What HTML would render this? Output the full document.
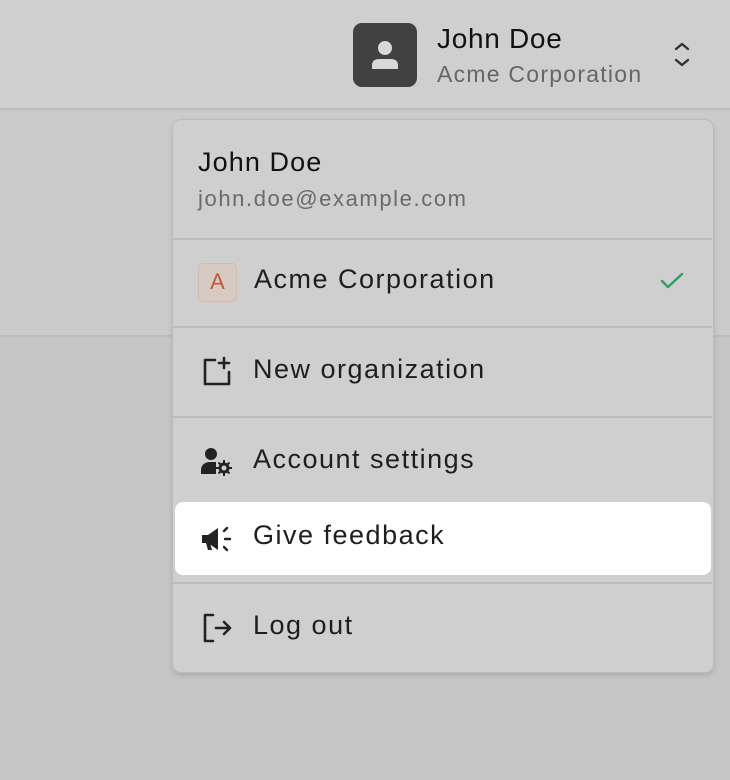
<!DOCTYPE html>
<html><head><style>
*{margin:0;padding:0;box-sizing:border-box}
body{width:730px;height:780px;background:#c6c6c6;font-family:"Liberation Sans",sans-serif;position:relative;overflow:hidden;color:#1c1c1c}
.hdr{position:absolute;left:0;top:0;width:730px;height:110px;background:#cfcfcf;border-bottom:2px solid #bdbdbd}
.mid{position:absolute;left:0;top:111px;width:730px;height:226px;background:#cbcbcb;border-bottom:2px solid #bdbdbd}
.av{position:absolute;left:353px;top:23px;width:64px;height:64px;background:#414141;border-radius:9px}
.t{position:absolute;white-space:nowrap}
.menu{position:absolute;left:172px;top:119px;width:542px;height:554px;background:#cfcfcf;border:1.5px solid #bcbcbc;border-radius:9px;box-shadow:0 3px 6px rgba(0,0,0,.12)}
.sep{position:absolute;left:0;width:539px;height:2px;background:#bdbdbd}
.hl{position:absolute;left:2px;top:382px;width:536px;height:73px;background:#fff;border-radius:8px}
.it{position:absolute;left:80px;font-size:27px;color:#1e1e1e;letter-spacing:1.5px;white-space:nowrap}
</style></head><body>
<div class="hdr"></div>
<div class="mid"></div>
<div class="av"><svg width="64" height="64" viewBox="0 0 64 64"><circle cx="32" cy="25" r="7" fill="#d8d8d8"/><path d="M19 46v-4c0-4 3-6 7-6h12c4 0 7 2 7 6v4z" fill="#d8d8d8"/></svg></div>
<div class="t" style="left:437px;top:23px;font-size:28px;color:#111;letter-spacing:0.7px">John Doe</div>
<div class="t" style="left:437px;top:61px;font-size:23px;color:#666;letter-spacing:1.25px">Acme Corporation</div>
<svg class="t" style="left:672px;top:40px" width="20" height="30" viewBox="0 0 20 30"><path d="M4 9l6-5 6 5M4 20l6 5 6-5" fill="none" stroke="#333" stroke-width="2.4" stroke-linecap="round" stroke-linejoin="round"/></svg>
<div class="menu">
<div class="t" style="left:25px;top:27px;font-size:27px;color:#111;letter-spacing:1.1px">John Doe</div>
<div class="t" style="left:25px;top:66px;font-size:22px;color:#6a6a6a;letter-spacing:1.6px">john.doe@example.com</div>
<div class="sep" style="top:118px"></div>
<div class="t" style="left:25px;top:143px;width:39px;height:39px;border:1.5px solid #dcb7a4;background:#d6cac3;border-radius:5px;color:#c05a38;font-size:22px;text-align:center;line-height:36px">A</div>
<div class="it" style="top:144px;left:81px">Acme Corporation</div>
<svg class="t" style="left:486px;top:150px" width="26" height="22" viewBox="0 0 26 22"><path d="M3 11l6 6L23 4" fill="none" stroke="#2f9e6a" stroke-width="2.4" stroke-linecap="round" stroke-linejoin="round"/></svg>
<div class="sep" style="top:206px"></div>
<svg class="t" style="left:28px;top:236px" width="32" height="32" viewBox="0 0 32 32"><path d="M14 4H4v24h24V16M23 2v10M18 7h10" fill="none" stroke="#222" stroke-width="2.6" stroke-linecap="round" stroke-linejoin="round"/></svg>
<div class="it" style="top:234px">New organization</div>
<div class="sep" style="top:296px"></div>
<svg class="t" style="left:27px;top:326px" width="34" height="30" viewBox="0 0 34 30"><circle cx="11" cy="8" r="6" fill="#222"/><path d="M1 28v-4c0-5 4-8 9-8h6v12z" fill="#222"/><circle cx="24" cy="22" r="4" fill="none" stroke="#222" stroke-width="3"/><path d="M24 14v3M24 27v3M16 22h3M29 22h3M18.5 16.5l2 2M27.5 25.5l2 2M18.5 27.5l2-2M27.5 18.5l2-2" stroke="#222" stroke-width="2"/></svg>
<div class="it" style="top:324px">Account settings</div>
<div class="hl"></div>
<svg class="t" style="left:27px;top:404px" width="34" height="30" viewBox="0 0 34 30"><path d="M2 11h6l10-7v22l-10-7H2z" fill="#222"/><path d="M6 19l2 7h4l-2-7z" fill="#222"/><path d="M24 7l3-3M24 23l3 3M25 15h5" stroke="#222" stroke-width="2.4" stroke-linecap="round"/></svg>
<div class="it" style="top:400px">Give feedback</div>
<div class="sep" style="top:462px"></div>
<svg class="t" style="left:28px;top:492px" width="32" height="32" viewBox="0 0 32 32"><path d="M12 3H4v26h8M15 16h14M23 10l6 6-6 6" fill="none" stroke="#222" stroke-width="2.6" stroke-linecap="round" stroke-linejoin="round"/></svg>
<div class="it" style="top:490px">Log out</div>
</div>
</body></html>
